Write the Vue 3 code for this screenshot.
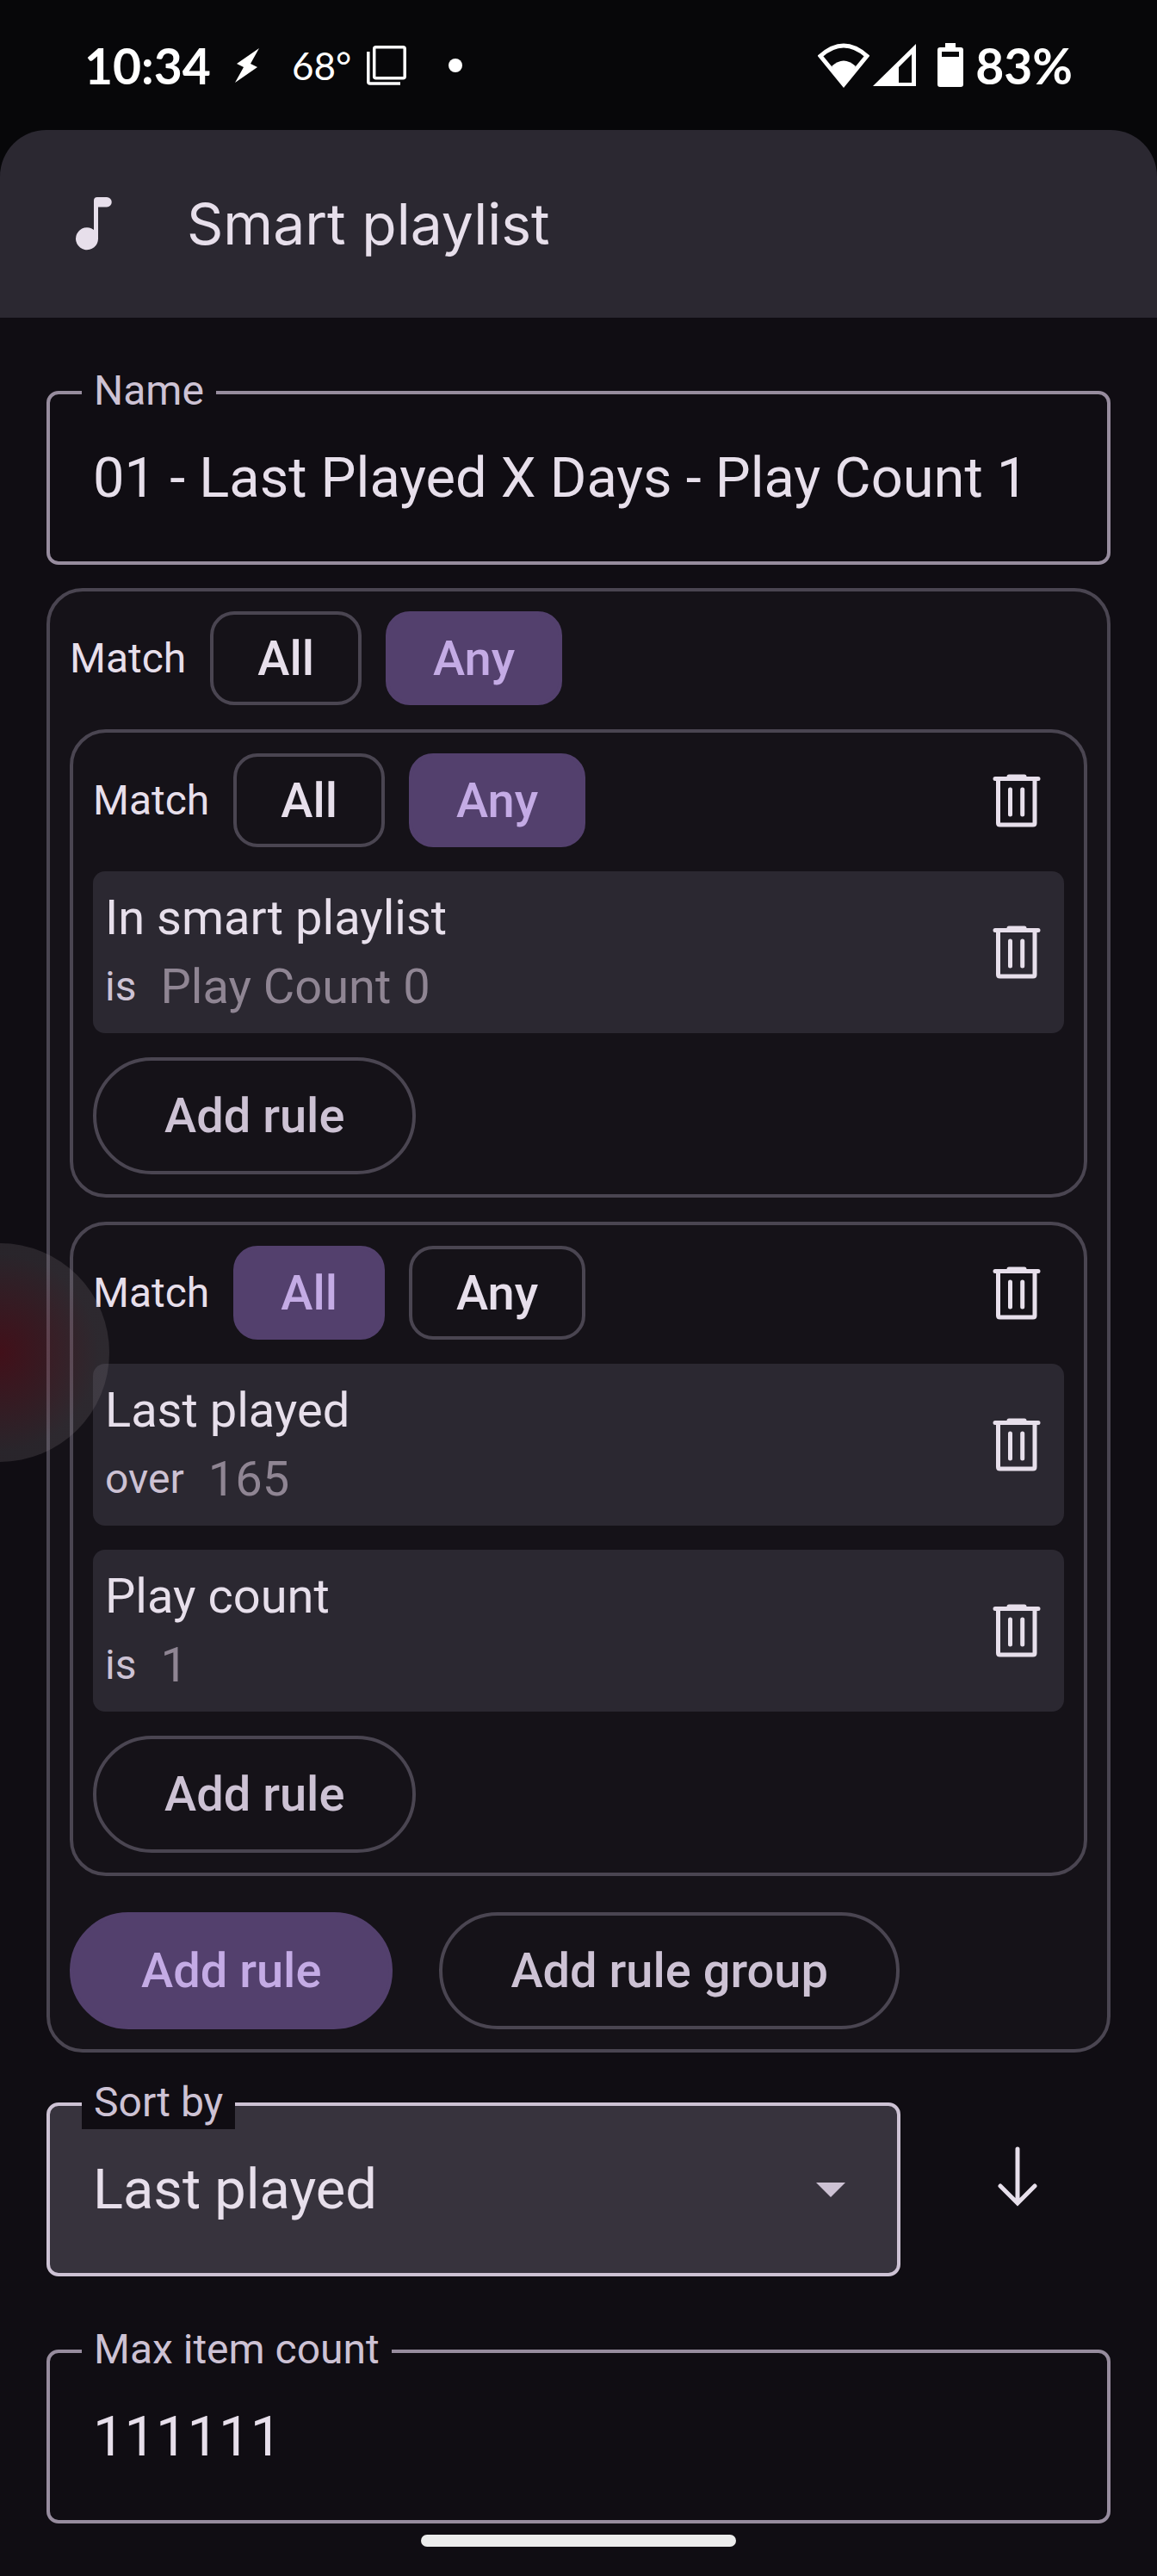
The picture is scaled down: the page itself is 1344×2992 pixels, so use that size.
<script setup>
import { ref, reactive } from 'vue'

const name = ref('01 - Last Played X Days - Play Count 1')
const maxItems = ref('111111')
const sortBy = ref('Last played')
const match = ref('Any')
const modes = ['All', 'Any']

const groups = reactive([
  { match: 'Any', rules: [{ field: 'In smart playlist', op: 'is', value: 'Play Count 0' }] },
  {
    match: 'All',
    rules: [
      { field: 'Last played', op: 'over', value: '165' },
      { field: 'Play count', op: 'is', value: '1' }
    ]
  }
])
</script>

<template>
  <div class="screen">
    <div class="status">
      <div class="status-left">
        <span class="clock">10:34</span>
        <svg class="bolt" width="28" height="42" viewBox="0 0 28 42" aria-hidden="true">
          <path d="M28 1 L2 19 L10 23 L0 41 L26 23 L18 19 Z" fill="#fff" />
        </svg>
        <span class="temp">68°</span>
        <svg class="pages" width="46" height="46" viewBox="0 0 46 46" fill="none" stroke="#fff" stroke-width="3.5" aria-hidden="true">
          <rect x="8.7" y="1.8" width="35.5" height="36" rx="2" />
          <path d="M1.8 7 V42 Q1.8 44 3.8 44 H39" />
        </svg>
        <svg width="16" height="16" viewBox="0 0 16 16" aria-hidden="true"><circle cx="8" cy="8" r="8" fill="#fff" /></svg>
      </div>
      <div class="status-right">
        <svg width="60" height="52" viewBox="0 0 60 52" aria-hidden="true">
          <path d="M3 15 Q30 -9 57 15 L30 48 Z" fill="none" stroke="#fff" stroke-width="5" />
          <path d="M16 27 Q30 14 44 27 L30 50 Z" fill="#fff" />
        </svg>
        <svg class="signal" width="50" height="52" viewBox="0 0 50 52" aria-hidden="true">
          <path fill="#fff" fill-rule="evenodd" d="M50 1 V50 H0 Z M45 13 L30 28 V46 H45 Z" />
        </svg>
        <svg class="battery" width="30" height="52" viewBox="0 0 30 52" aria-hidden="true">
          <path fill="#fff" fill-rule="evenodd" d="M9 0 H21 V5 H27 Q30 5 30 8 V48 Q30 51 27 51 H3 Q0 51 0 48 V8 Q0 5 3 5 H9 Z M5 10 V16 H25 V10 Z" />
        </svg>
        <span class="clock">83%</span>
      </div>
    </div>

    <div class="header-wrap">
      <header class="header">
        <svg width="42" height="62" viewBox="0 0 42 62" aria-hidden="true">
          <path fill="#e7dfeb" d="M25 0 H36 A5.500 5.500 0 0 1 36 11.500 H26 V48 A13 13 0 1 1 21 38 V4 Q21 0 25 0 Z" />
        </svg>
        <h1>Smart playlist</h1>
      </header>
    </div>

    <main class="form">
      <div class="field">
        <label for="name">Name</label>
        <input id="name" v-model="name" type="text" />
      </div>

      <section class="group root">
        <div class="match">
          <span class="match-label">Match</span>
          <button
            v-for="m in modes"
            :key="m"
            type="button"
            class="toggle"
            :class="{ on: match === m }"
            :aria-pressed="match === m"
            @click="match = m"
          >{{ m }}</button>
        </div>

        <section v-for="(group, gi) in groups" :key="gi" class="group nested">
          <div class="match">
            <span class="match-label">Match</span>
            <button
              v-for="m in modes"
              :key="m"
              type="button"
              class="toggle"
              :class="{ on: group.match === m }"
              :aria-pressed="group.match === m"
              @click="group.match = m"
            >{{ m }}</button>
            <button type="button" class="trash" aria-label="Delete group" @click="groups.splice(gi, 1)">
              <svg width="56" height="62" viewBox="0 0 56 62" fill="none" stroke="#e7dfeb" stroke-width="5" stroke-linecap="round" aria-hidden="true">
                <path d="M3 5.500 H53 M19 3 H37" />
                <path d="M6.500 6 V57 Q6.500 59 8.500 59 H47 Q49 59 49 57 V6 M20.500 18 V47 M34.700 18 V47" />
              </svg>
            </button>
          </div>
          <article v-for="(rule, ri) in group.rules" :key="ri" class="rule">
            <div class="rule-text">
              <div>{{ rule.field }}</div>
              <div class="rule-test">
                <span class="rule-op">{{ rule.op }}</span>
                <span class="rule-value">{{ rule.value }}</span>
              </div>
            </div>
            <button type="button" class="trash" aria-label="Delete rule" @click="group.rules.splice(ri, 1)">
              <svg width="56" height="62" viewBox="0 0 56 62" fill="none" stroke="#e7dfeb" stroke-width="5" stroke-linecap="round" aria-hidden="true">
                <path d="M3 5.500 H53 M19 3 H37" />
                <path d="M6.500 6 V57 Q6.500 59 8.500 59 H47 Q49 59 49 57 V6 M20.500 18 V47 M34.700 18 V47" />
              </svg>
            </button>
          </article>
          <button type="button" class="pill">Add rule</button>
        </section>

        <div class="actions">
          <button type="button" class="pill filled">Add rule</button>
          <button type="button" class="pill">Add rule group</button>
        </div>
      </section>

      <div class="sort-row">
        <div class="field sort">
          <label for="sort">Sort by</label>
          <div class="select-box">
            <select id="sort" v-model="sortBy">
              <option>Last played</option>
              <option>Play count</option>
            </select>
            <svg class="caret" width="34" height="17" viewBox="0 0 34 17" aria-hidden="true">
              <path d="M0 0 H34 L17 17 Z" fill="#cdc2d4" />
            </svg>
          </div>
        </div>
        <button type="button" class="direction" aria-label="Sort descending">
          <svg width="48" height="70" viewBox="0 0 48 70" fill="none" stroke="#e7dfeb" stroke-width="5" stroke-linecap="round" aria-hidden="true">
            <path d="M24 3 V65 M4 46 L24 66 L44 46" />
          </svg>
        </button>
      </div>

      <div class="field max">
        <label for="max">Max item count</label>
        <input id="max" v-model="maxItems" type="text" inputmode="numeric" />
      </div>
    </main>

    <div class="home-bar"></div>
    <div class="bubble"></div>
  </div>
</template>

<style>
body {
  margin: 0;
  background: #100d13;
}
</style>

<style scoped>
.screen {
  position: relative;
  overflow: hidden;
  padding-bottom: 34px;
  background: #100d13;
  color: #e7dfeb;
  font-family: Roboto, "Liberation Sans", sans-serif;
}
.screen * {
  box-sizing: border-box;
}
button,
input,
select {
  margin: 0;
  font-family: inherit;
  color: inherit;
}
button {
  cursor: pointer;
}
svg {
  display: block;
  flex: none;
}

/* status bar */
.status {
  display: flex;
  justify-content: space-between;
  align-items: center;
  height: 151px;
  padding: 0 98px;
  background: #070709;
  color: #fff;
  font-family: Lato, sans-serif;
}
.status-left,
.status-right {
  display: flex;
  align-items: center;
}
.clock {
  font-size: 57px;
  font-weight: 700;
  line-height: 60px;
}
.bolt {
  margin: 0 38px 0 28px;
}
.temp {
  font-size: 44px;
  line-height: 60px;
}
.pages {
  margin: 0 49px 0 18px;
}
.signal {
  margin: 0 25px 0 4px;
}
.battery {
  margin-right: 14px;
}

/* title bar */
.header-wrap {
  background: #070709;
}
.header {
  display: flex;
  align-items: center;
  gap: 87px;
  height: 218px;
  padding: 0 88px;
  border-radius: 54px 54px 0 0;
  background: #2b2831;
}
h1 {
  margin: 0;
  font-family: Inter, sans-serif;
  font-size: 66px;
  font-weight: 400;
  line-height: 80px;
}

/* outlined fields */
.form {
  padding: 54px 54px 0;
}
.field {
  display: flex;
  flex-direction: column;
}
.field label {
  position: relative;
  z-index: 1;
  align-self: flex-start;
  margin: 0 0 -31px 41px;
  padding: 0 14px;
  background: #100d13;
  color: #cdc2d4;
  font-size: 48px;
  line-height: 62px;
}
.field input,
.field select {
  width: 100%;
  height: 202px;
  padding: 0 50px;
  border: 4px solid #978c9e;
  border-radius: 14px;
  outline: none;
  background: transparent;
  font-size: 65px;
}
.field select {
  display: block;
  appearance: none;
  border-color: #cdc2d4;
  background: #37333d;
}
.select-box {
  position: relative;
}
.caret {
  position: absolute;
  top: 0;
  right: 64px;
  bottom: 0;
  margin: auto 0;
  pointer-events: none;
}
.sort-row {
  display: flex;
  gap: 27px;
  margin-top: 27px;
}
.sort {
  flex: 1;
}
.direction {
  display: flex;
  align-items: center;
  justify-content: center;
  width: 217px;
  padding: 0;
  border: 0;
  background: none;
}
.max {
  margin-top: 54px;
}

/* rule groups */
.group {
  display: flex;
  flex-direction: column;
  gap: 28px;
  padding: 23px;
  border: 4px solid #4a4551;
  border-radius: 42px;
  background: #151218;
}
.root {
  margin-top: 27px;
}
.nested {
  padding-top: 24px;
}
.match {
  display: flex;
  align-items: center;
  gap: 28px;
}
.match-label {
  font-size: 48px;
  line-height: 62px;
}
.toggle {
  height: 109px;
  padding: 0 51px;
  border: 4px solid #4a4551;
  border-radius: 28px;
  background: none;
  font-size: 56px;
  font-weight: 500;
}
.toggle.on {
  border-color: #53406d;
  background: #53406d;
  color: #c4abe5;
}
.trash {
  display: flex;
  align-items: center;
  justify-content: center;
  width: 110px;
  height: 109px;
  margin-left: auto;
  padding: 0;
  border: 0;
  background: none;
}
.rule {
  display: flex;
  align-items: center;
  padding: 14px 0 14px 14px;
  border-radius: 14px;
  background: #2b2831;
}
.rule-text {
  font-size: 56px;
  line-height: 80px;
}
.rule-test {
  display: flex;
  gap: 28px;
}
.rule-op {
  color: #cdc2d4;
  font-size: 48px;
}
.rule-value {
  color: #8f8593;
}
.pill {
  align-self: flex-start;
  height: 136px;
  padding: 0 79px;
  border: 4px solid #4a4551;
  border-radius: 68px;
  background: none;
  color: #cdc2d4;
  font-size: 56px;
  font-weight: 500;
}
.pill.filled {
  border-color: #53406d;
  background: #53406d;
  color: #c4abe5;
}
.actions {
  display: flex;
  gap: 54px;
  padding-top: 14px;
}

/* overlays */
.home-bar {
  width: 366px;
  height: 14px;
  margin: 13px auto 0;
  border-radius: 7px;
  background: #ececec;
}
.bubble {
  position: absolute;
  left: -127px;
  top: 1444px;
  width: 254px;
  height: 254px;
  border-radius: 50%;
  background: radial-gradient(circle closest-side, rgba(140, 20, 35, 0.4), rgba(141, 132, 138, 0.2) 90%);
  pointer-events: none;
}
</style>
